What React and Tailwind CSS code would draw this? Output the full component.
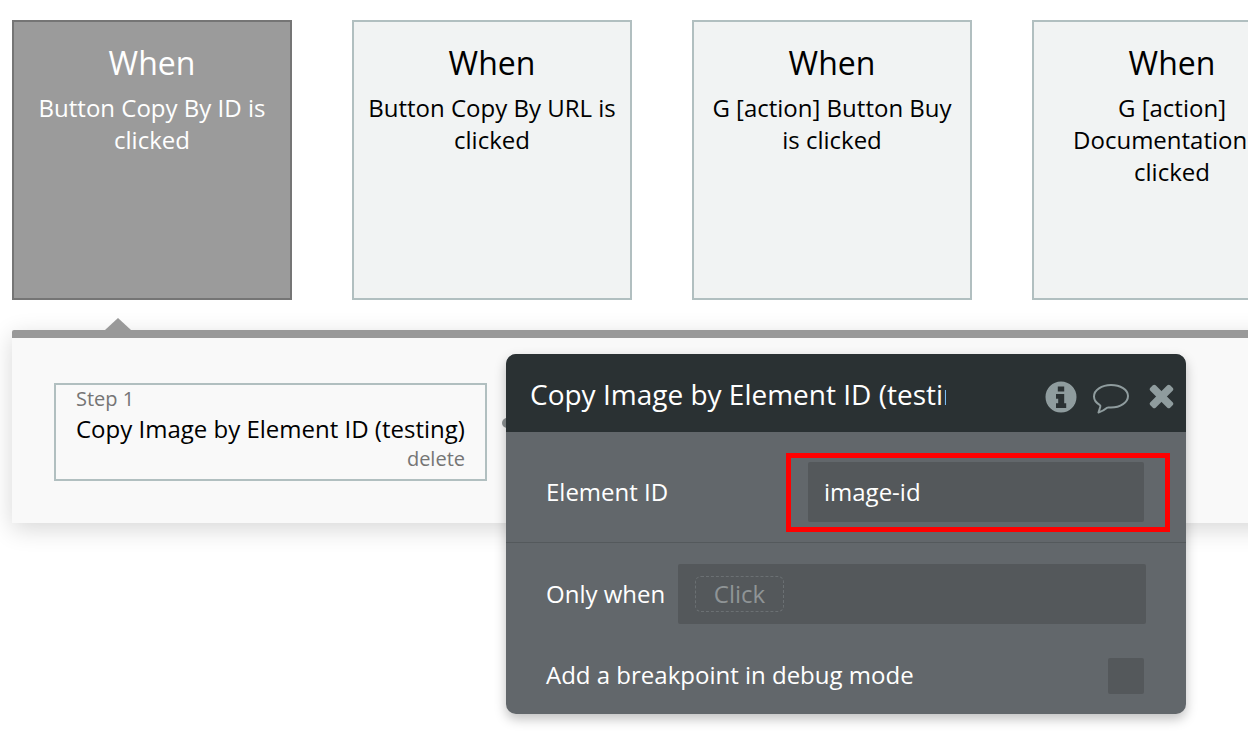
const sans = "font-['Open_Sans',sans-serif]";

function Card({ sub, active }) {
  return (
    <div
      className={
        "box-border h-[280px] w-[280px] shrink-0 border-2 px-2 pt-[19px] text-center " +
        (active
          ? "border-[#757575] bg-[#9b9b9b] text-white"
          : "border-[#b1bfc0] bg-[#f1f3f3] text-black")
      }
    >
      <div className="text-[32px] leading-[44px]">When</div>
      <div className="mt-[7px] text-[24px] leading-[32px]">{sub}</div>
    </div>
  );
}

function InfoIcon() {
  return (
    <svg width="32" height="32" viewBox="0 0 32 32" className="shrink-0">
      <path
        fillRule="evenodd"
        fill="#8f9c9e"
        d="M16 .5a15.500 15.500 0 1 0 0 31 15.500 15.500 0 0 0 0-31zM12.800 5.500h6.400v5h-6.400zM11 13h8.200v9.200h2V27H11v-4.800h2.200v-4.400H11z"
      />
    </svg>
  );
}

function CommentIcon() {
  return (
    <svg width="38" height="32" viewBox="0 0 38 32" className="mt-[4px] shrink-0">
      <path
        fill="none"
        stroke="#8f9c9e"
        strokeWidth="2"
        strokeLinejoin="round"
        d="M19 2C9.600 2 2 7.200 2 13.500c0 3.600 2.500 6.500 5.600 8.300.8.500 1 1.200.7 2L6.500 29.500c3-.9 6.200-2.700 8.600-4.700.4-.3.8-.4 1.300-.4.800.1 1.700.1 2.600.1 9.400 0 17-5.200 17-11.500S28.400 2 19 2z"
      />
    </svg>
  );
}

function CloseIcon() {
  return (
    <svg width="25" height="25" viewBox="0 0 25 25" className="shrink-0">
      <rect x="-1.500" y="8.750" width="28" height="7.500" rx="2" fill="#8f9c9e" transform="rotate(45 12.500 12.500)" />
      <rect x="-1.500" y="8.750" width="28" height="7.500" rx="2" fill="#8f9c9e" transform="rotate(-45 12.500 12.500)" />
    </svg>
  );
}

export default function App() {
  return (
    <div className={"relative h-[752px] w-[1248px] overflow-hidden bg-white " + sans}>
      <div className="flex gap-[60px] pl-3 pt-5">
        <Card active sub="Button Copy By ID is clicked" />
        <Card sub="Button Copy By URL is clicked" />
        <Card sub="G [action] Button Buy is clicked" />
        <Card sub="G [action] Documentation is clicked" />
      </div>

      <div className="relative ml-3 mt-[30px] box-border h-[193px] w-[1300px] rounded-t-[2px] border-t-8 border-[#999999] bg-[#f9f9f9] pl-[42px] pt-[45px] shadow-[0_6px_24px_rgba(0,0,0,0.16)]">
        <div className="absolute -top-[20px] left-[93px] h-0 w-0 border-x-[13px] border-b-[12px] border-x-transparent border-b-[#999999]" />
        <div className="box-border flex h-[98px] w-[433px] flex-col border-2 border-[#b1bfc0] px-5 pt-px">
          <div className="text-[20px] leading-[26px] text-[#757575]">Step 1</div>
          <div className="mt-px whitespace-nowrap text-[24px] leading-[32px] text-black">
            Copy Image by Element ID (testing)
          </div>
          <div className="mt-[2px] text-right text-[20px] leading-[24px] text-[#757575]">delete</div>
        </div>
        <div className="absolute left-[490px] top-[80px] h-[10px] w-[10px] rounded-full bg-[#8b9092]" />
      </div>

      <div className="absolute left-[506px] top-[354px] w-[680px] overflow-hidden rounded-[10px] bg-[#62676b] shadow-[0_5px_12px_rgba(0,0,0,0.25)]">
        <div className="flex h-[78px] items-center bg-[#2a3133] pl-6 pr-3">
          <div className="w-[416px] overflow-hidden whitespace-nowrap pt-[2px] text-[28px] text-white">
            Copy Image by Element ID (testing)
          </div>
          <div className="ml-auto flex items-center pt-[7px]">
            <InfoIcon />
            <div className="ml-[15px]">
              <CommentIcon />
            </div>
            <div className="ml-[19px]">
              <CloseIcon />
            </div>
          </div>
        </div>

        <div className="flex h-[111px] items-center border-b border-[#54595c] pl-10 pr-[42px] pt-[10px]">
          <div className="text-[24px] text-white">Element ID</div>
          <div className="ml-auto flex h-[60px] w-[336px] items-center rounded-[2px] bg-[#54585b] px-4 text-[24px] text-white">
            image-id
          </div>
        </div>

        <div className="flex h-[102px] items-center pl-10 pr-10">
          <div className="text-[24px] text-white">Only when</div>
          <div className="ml-auto flex h-[60px] w-[468px] items-center rounded-[2px] bg-[#54585b] pl-[17px]">
            <div className="flex h-[36px] w-[89px] items-center justify-center rounded-[6px] border border-dashed border-[#6b7073] text-[24px] text-[#8f9496]">
              Click
            </div>
          </div>
        </div>

        <div className="flex h-[69px] items-center pb-[7px] pl-10 pr-[42px]">
          <div className="-mt-[3px] text-[24px] text-white">Add a breakpoint in debug mode</div>
          <div className="ml-auto h-9 w-9 rounded-[2px] bg-[#54585b]" />
        </div>
      </div>

      <div className="absolute left-[786px] top-[453px] box-border h-[79px] w-[384px] border-[5px] border-[#ff0000]" />
    </div>
  );
}
